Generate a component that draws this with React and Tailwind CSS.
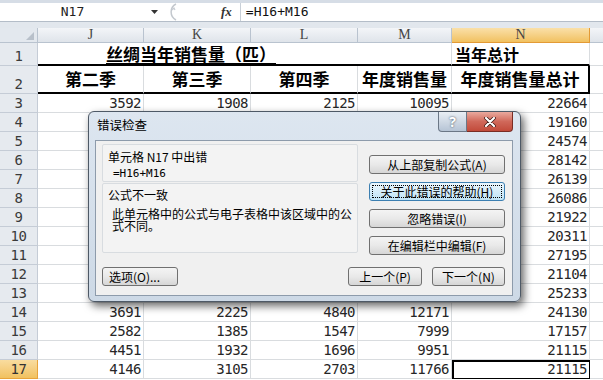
import React from 'react';

const CJK = "[font-family:'Noto_Sans_CJK_SC',sans-serif]";
const MONO = "[font-family:'DejaVu_Sans_Mono',monospace]";
const SERIF = "[font-family:'Liberation_Serif',serif]";
const GRID = 'grid grid-cols-[38px_106px_107px_107px_94px_138px_1fr]';

const rows = [
  [3, '3592', '1908', '2125', '10095', '22664'],
  [4, '', '', '', '', '19160'],
  [5, '', '', '', '', '24574'],
  [6, '', '', '', '', '28142'],
  [7, '', '', '', '', '26139'],
  [8, '', '', '', '', '26086'],
  [9, '', '', '', '', '21922'],
  [10, '', '', '', '', '20311'],
  [11, '', '', '', '', '27195'],
  [12, '', '', '', '', '21104'],
  [13, '', '', '', '', '25233'],
  [14, '3691', '2225', '4840', '12171', '24130'],
  [15, '2582', '1385', '1547', '7999', '17157'],
  [16, '4451', '1932', '1696', '9951', '21115'],
  [17, '4146', '3105', '2703', '11766', '21115'],
];

const Cell = ({ children, className = '' }) => (
  <div className={`flex items-end justify-end pr-[2px] pb-[2px] border-r border-b border-[#d9dcdf] text-[14px] leading-none tracking-[-0.5px] text-[#262626] ${MONO} ${className}`}>
    {children}
  </div>
);

const RowHead = ({ n, active }) => (
  <div
    className={`flex items-end justify-center pb-[2px] border-r border-b text-[14px] leading-none tracking-[-0.5px] ${MONO} ${
      active
        ? 'bg-linear-to-b from-[#f9dc9f] to-[#f1c15f] border-[#e8a33a] text-[#333]'
        : 'bg-[#e6eaef] border-[#c5ccd6] text-[#3a3a3a]'
    }`}
  >
    {n}
  </div>
);

const Btn = ({ children, className = '', focus }) => (
  <div
    className={`h-[19px] rounded-[3px] border flex items-center justify-center text-[12px] leading-none text-black ${CJK} ${
      focus
        ? 'border-[#3c7fb1] bg-linear-to-b from-[#eaf6fd] to-[#c0e3f6] p-[2px]'
        : 'border-[#707070] bg-linear-to-b from-[#f4f4f4] via-[#e9e9e9] to-[#d6d6d6]'
    } ${className}`}
  >
    {focus ? (
      <span className="w-full h-full flex items-center justify-center border border-dotted border-black">{children}</span>
    ) : (
      children
    )}
  </div>
);

function ErrorDialog() {
  return (
    <div className="absolute left-[88px] top-[111px] w-[433px] h-[191px] rounded-[6px] border border-[#4e5966] bg-linear-to-b from-[#dde6f0] to-[#cdd9e6] shadow-[3px_4px_9px_rgba(0,0,0,0.6)] flex flex-col pl-[6px] pr-[7px] pb-[5px]">
      <div className="h-[28px] flex items-start">
        <span className={`mt-[5px] ml-[2px] text-[12.5px] leading-[15px] text-black ${CJK}`}>错误检查</span>
        <div className="ml-auto flex">
          <div className="w-[29px] h-[20px] border border-t-0 border-[#6b7786] rounded-bl-[4px] bg-linear-to-b from-[#e9eef4] to-[#b6c4d5] flex items-center justify-center text-[14px] font-bold text-white [text-shadow:0_0_2px_#2c3a4a] font-sans">
            ?
          </div>
          <div className="w-[46px] h-[20px] border border-t-0 border-l-0 border-[#7a2c24] rounded-br-[4px] bg-linear-to-b from-[#e9a99e] via-[#d0685a] to-[#c24a3a] flex items-center justify-center">
            <svg width="12" height="10" viewBox="0 0 12 10">
              <path d="M2 1 L10 9 M10 1 L2 9" stroke="#3a1510" strokeWidth="3.6" strokeLinecap="round" />
              <path d="M2 1 L10 9 M10 1 L2 9" stroke="#fff" strokeWidth="2.2" strokeLinecap="round" />
            </svg>
          </div>
        </div>
      </div>

      <div className="flex-1 border border-[#8d9bab] bg-[#f0f0f0] flex flex-col">
        <div className="flex">
          <div className="ml-[6px] mt-[3px] w-[256px] flex flex-col">
            <div className={`h-[38px] border border-[#d8dce0] bg-[#f3f3f3] rounded-[2px] pl-[5px] pt-[5px] text-[12px] leading-[14px] text-black ${CJK}`}>
              <div>单元格 N17 中出错</div>
              <div className={`mt-[3px] pl-[5px] text-[11px] ${MONO}`}>=H16+M16</div>
            </div>
            <div className={`mt-[1px] h-[70px] border border-[#d8dce0] bg-[#f3f3f3] rounded-[2px] pl-[5px] pt-[4px] text-[12px] text-black ${CJK}`}>
              <div className="leading-[14px]">公式不一致</div>
              <p className="mt-[6px] pl-[4px] w-[246px] leading-[12px]">此单元格中的公式与电子表格中该区域中的公式不同。</p>
            </div>
          </div>
          <div className="ml-auto mr-[7px] mt-[14px] w-[136px] flex flex-col gap-[8px]">
            <Btn>从上部复制公式(A)</Btn>
            <Btn focus>关于此错误的帮助(H)</Btn>
            <Btn>忽略错误(I)</Btn>
            <Btn>在编辑栏中编辑(F)</Btn>
          </div>
        </div>
        <div className="mt-auto mb-[9px] flex items-center pl-[6px] pr-[7px]">
          <Btn className="w-[76px] justify-start pl-[6px]">选项(O)...</Btn>
          <Btn className="ml-auto w-[74px]">上一个(P)</Btn>
          <Btn className="ml-[10px] w-[73px]">下一个(N)</Btn>
        </div>
      </div>
    </div>
  );
}

export default function App() {
  return (
    <div className="relative w-[603px] h-[380px] overflow-hidden bg-white">
      <div className="h-[3px] bg-[#d6dde6]" />
      <div className="h-[19px] flex items-center bg-white border-b border-[#b4bdc8]">
        <div className={`w-[145px] text-center text-[13px] text-[#222] ${MONO}`}>N17</div>
        <svg width="8" height="5" viewBox="0 0 8 5" className="ml-[6px]">
          <path d="M0 0 H7 L3.5 4 Z" fill="#333" />
        </svg>
        <svg width="16" height="18" viewBox="0 0 16 18" className="ml-[4px]">
          <path d="M13 1 A9 9 0 0 0 13 17" fill="none" stroke="#c3c8ce" strokeWidth="1.5" />
          <path d="M9 7 l2 -2 l1 2" fill="none" stroke="#c8cdd3" strokeWidth="1.2" />
        </svg>
        <span className="ml-[42px] text-[13px] italic font-bold text-[#333] [font-family:'Liberation_Serif',serif]">fx</span>
        <div className="ml-[8px] h-full border-l border-[#c9d0d8]" />
        <span className={`ml-[5px] text-[13px] text-[#111] ${MONO}`}>=H16+M16</span>
      </div>
      <div className="h-[6px] bg-[#e2e7ed]" />

      {/* column headers */}
      <div className={`${GRID} h-[15px]`}>
        <div className="relative bg-[#e3e8ee] border-r border-b border-[#b9c3cf]">
          <svg width="8" height="8" viewBox="0 0 8 8" className="absolute right-[3px] bottom-[2px]">
            <path d="M8 0 V8 H0 Z" fill="#b8c0ca" />
          </svg>
        </div>
        {['J', 'K', 'L', 'M'].map((c) => (
          <div
            key={c}
            className={`flex items-center justify-center bg-linear-to-b from-[#f3f5f8] to-[#dfe4ea] border-r border-b border-[#b9c3cf] text-[14px] leading-none text-[#444] ${SERIF}`}
          >
            {c}
          </div>
        ))}
        <div className={`flex items-center justify-center bg-linear-to-b from-[#fae0a8] to-[#f1c15f] border-r border-b border-[#e39a35] text-[14px] leading-none text-[#444] ${SERIF}`}>
          N
        </div>
        <div className="bg-linear-to-b from-[#f3f5f8] to-[#dfe4ea] border-b border-[#b9c3cf]" />
      </div>

      {/* row 1 */}
      <div className={`${GRID} h-[23px]`}>
        <RowHead n={1} />
        <div className={`col-span-4 flex items-end pl-[68px] border-r border-b-2 border-r-[#d9dcdf] border-b-black text-[17px] leading-[20px] font-bold underline underline-offset-2 text-black ${CJK}`}>
          丝绸当年销售量（匹）
        </div>
        <div className={`flex items-end pl-[3px] border-r border-b-2 border-r-[#d9dcdf] border-b-black text-[16px] leading-[20px] font-bold text-black ${CJK}`}>
          当年总计
        </div>
        <div className="border-b border-[#d9dcdf]" />
      </div>

      {/* row 2 */}
      <div className={`${GRID} h-[28px]`}>
        <RowHead n={2} />
        {['第二季', '第三季', '第四季', '年度销售量'].map((t) => (
          <div
            key={t}
            className={`flex items-center justify-center border-r border-b-2 border-r-[#d9dcdf] border-b-black text-[17px] font-bold text-black ${CJK}`}
          >
            {t}
          </div>
        ))}
        <div className={`flex items-center justify-center border-r-2 border-b-2 border-black text-[17px] font-bold text-black ${CJK}`}>
          年度销售量总计
        </div>
        <div className="border-b border-[#d9dcdf]" />
      </div>

      {/* data rows */}
      {rows.map(([n, j, k, l, m, total]) => (
        <div key={n} className={`${GRID} h-[19px]`}>
          <RowHead n={n} active={n === 17} />
          <Cell>{j}</Cell>
          <Cell>{k}</Cell>
          <Cell>{l}</Cell>
          <Cell>{m}</Cell>
          <Cell className={n === 17 ? 'border-2 border-black pr-[1px] pb-[1px]' : ''}>{total}</Cell>
          <div className="border-b border-[#d9dcdf]" />
        </div>
      ))}

      <ErrorDialog />
    </div>
  );
}
